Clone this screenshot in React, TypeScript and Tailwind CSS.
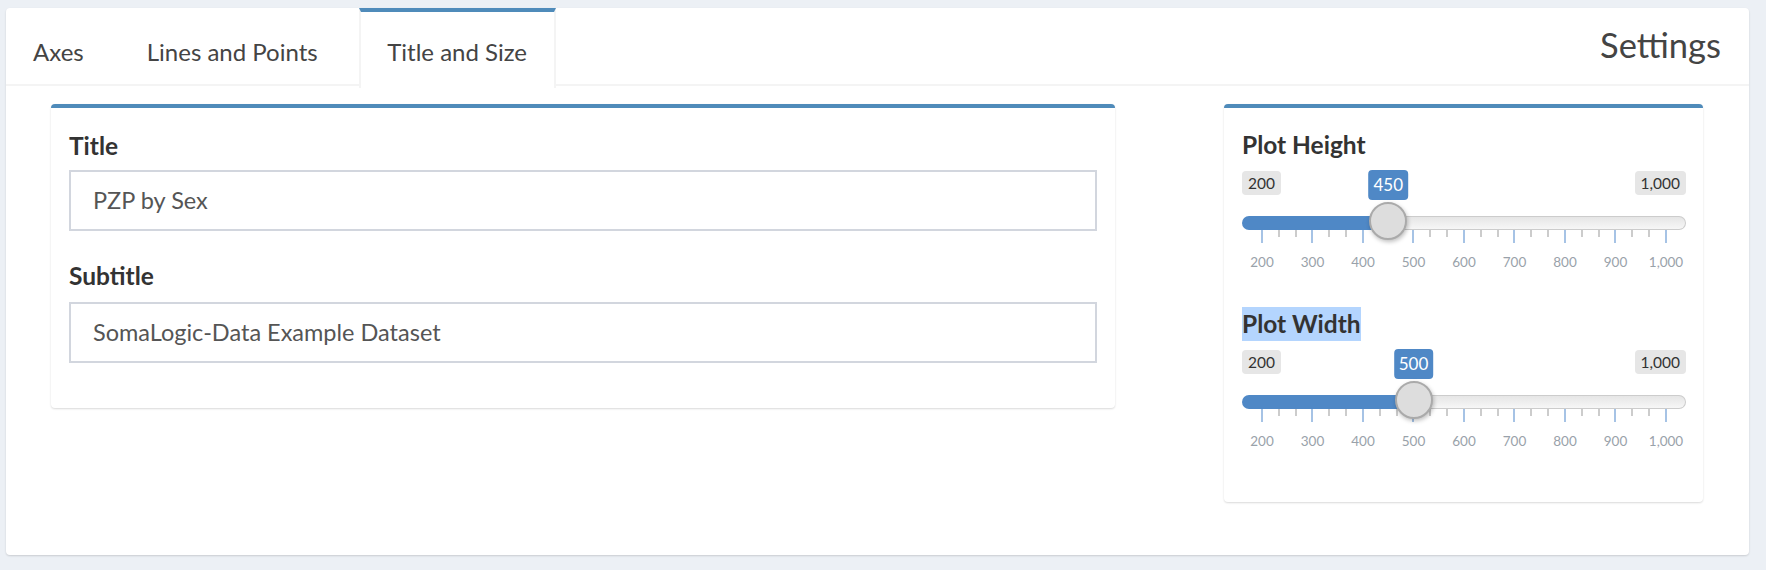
const MAJORS = [200, 300, 400, 500, 600, 700, 800, 900, 1000];

// every 100 gets a major tick, with two small ticks between
const TICKS = MAJORS.flatMap((v, i) => (i < MAJORS.length - 1 ? [true, false, false] : [true]));

function toX(v: number) {
  return 20 + ((v - 200) / 800) * 404;
}

function Slider({ value }: { value: number }) {
  const x = toX(value);
  return (
    <div className="relative w-[444px] pb-[35px]">
      {/* min / max */}
      <div className="flex h-[24px] justify-between text-[15.5px] leading-[24px] text-[#333]">
        <span className="rounded-[4px] bg-[#e6e6e6] px-[6px]">200</span>
        <span className="rounded-[4px] bg-[#e6e6e6] px-[6px]">1,000</span>
      </div>

      {/* track */}
      <div className="mt-[21px] flex h-[14px]">
        <div className="rounded-l-full bg-[#4f88c6]" style={{ width: x }} />
        <div className="flex-1 rounded-r-full border border-l-0 border-[#cccccc] bg-[linear-gradient(to_bottom,#dddddd_-50%,#ffffff_150%)]" />
      </div>

      {/* grid */}
      <div className="flex items-start justify-between px-[19px]">
        {TICKS.map((major, i) => (
          <div key={i} className={major ? "h-[13px] w-[2px] bg-[#a6c3e5]" : "h-[7px] w-[2px] bg-[#cccccc]"} />
        ))}
      </div>
      <div className="mt-[10px] flex justify-between px-[20px] text-[13.5px] leading-[18px] text-[#99a2aa]">
        {MAJORS.map((v) => (
          <div key={v} className="flex w-0 justify-center whitespace-nowrap">
            {v.toLocaleString("en-US")}
          </div>
        ))}
      </div>

      {/* value bubble + handle */}
      <span
        className="absolute top-[-1px] h-[30px] -translate-x-1/2 rounded-[4px] bg-[#4f88c6] px-[5px] text-[17px] leading-[30px] text-white"
        style={{ left: x }}
      >
        {value}
      </span>
      <div
        className="absolute top-[31px] h-[38px] w-[38px] -translate-x-1/2 rounded-full border-2 border-[#aaaaaa] bg-[#dddddd] shadow-[1px_2px_4px_rgba(0,0,0,0.25)]"
        style={{ left: x }}
      />
    </div>
  );
}

export default function App() {
  return (
    <div className="h-[570px] bg-[#ecf0f5] pl-[6px] pr-[17px] pt-[8px] font-[Lato,sans-serif]">
      <div className="h-[547px] rounded-[4px] bg-white shadow-[0_1px_2px_rgba(0,0,0,0.15)]">
        {/* Tabs */}
        <div className="flex h-[78px] border-b-2 border-[#f4f4f4]">
          <div className="mr-[9px] flex h-[78px] items-center border-t-4 border-transparent px-[27px] pt-[6px] text-[24px] text-[#444]">
            Axes
          </div>
          <div className="mr-[14px] flex h-[78px] items-center border-t-4 border-transparent px-[27px] pt-[6px] text-[24px] text-[#444]">
            Lines and Points
          </div>
          <div className="z-10 flex h-[80px] items-center border-x-2 border-t-4 border-x-[#f4f4f4] border-t-[#4f8bba] bg-white px-[26.5px] pb-[2px] pt-[6px] text-[24px] text-[#444]">
            Title and Size
          </div>
          <div className="ml-auto self-start pr-[28px] pt-[18px] text-[34.5px] leading-[38px] text-[#444]">
            Settings
          </div>
        </div>

        {/* Content */}
        <div className="flex items-start justify-between pl-[45px] pr-[46px] pt-[18px]">
          <div className="h-[304px] w-[1064px] rounded-[4px] border-t-4 border-[#4f8bba] bg-white px-[18px] pt-[20px] shadow-[0_1px_2px_rgba(0,0,0,0.15)]">
            <div className="mb-[6px] h-[36px] text-[24.5px] font-bold leading-[36px] text-[#333]">Title</div>
            <div className="flex h-[61px] items-center border-2 border-[#d2d6de] px-[22px] text-[23.5px] text-[#555]">
              PZP by Sex
            </div>
            <div className="mb-[8px] mt-[27px] h-[36px] text-[24.5px] font-bold leading-[36px] text-[#333]">Subtitle</div>
            <div className="flex h-[61px] items-center border-2 border-[#d2d6de] px-[22px] text-[23.5px] text-[#555]">
              SomaLogic-Data Example Dataset
            </div>
          </div>

          <div className="h-[398px] w-[479px] rounded-[4px] border-t-4 border-[#4f8bba] bg-white pl-[18px] pt-[19px] shadow-[0_1px_2px_rgba(0,0,0,0.15)]">
            <div className="mb-[8px] h-[36px] text-[24.5px] font-bold leading-[36px] text-[#333]">Plot Height</div>
            <Slider value={450} />
            <div className="mb-[8px] h-[36px] text-[24.5px] font-bold leading-[36px] text-[#333]">
              <span className="inline-block bg-[#b4d5fe] leading-[34px]">Plot Width</span>
            </div>
            <Slider value={500} />
          </div>
        </div>
      </div>
    </div>
  );
}
